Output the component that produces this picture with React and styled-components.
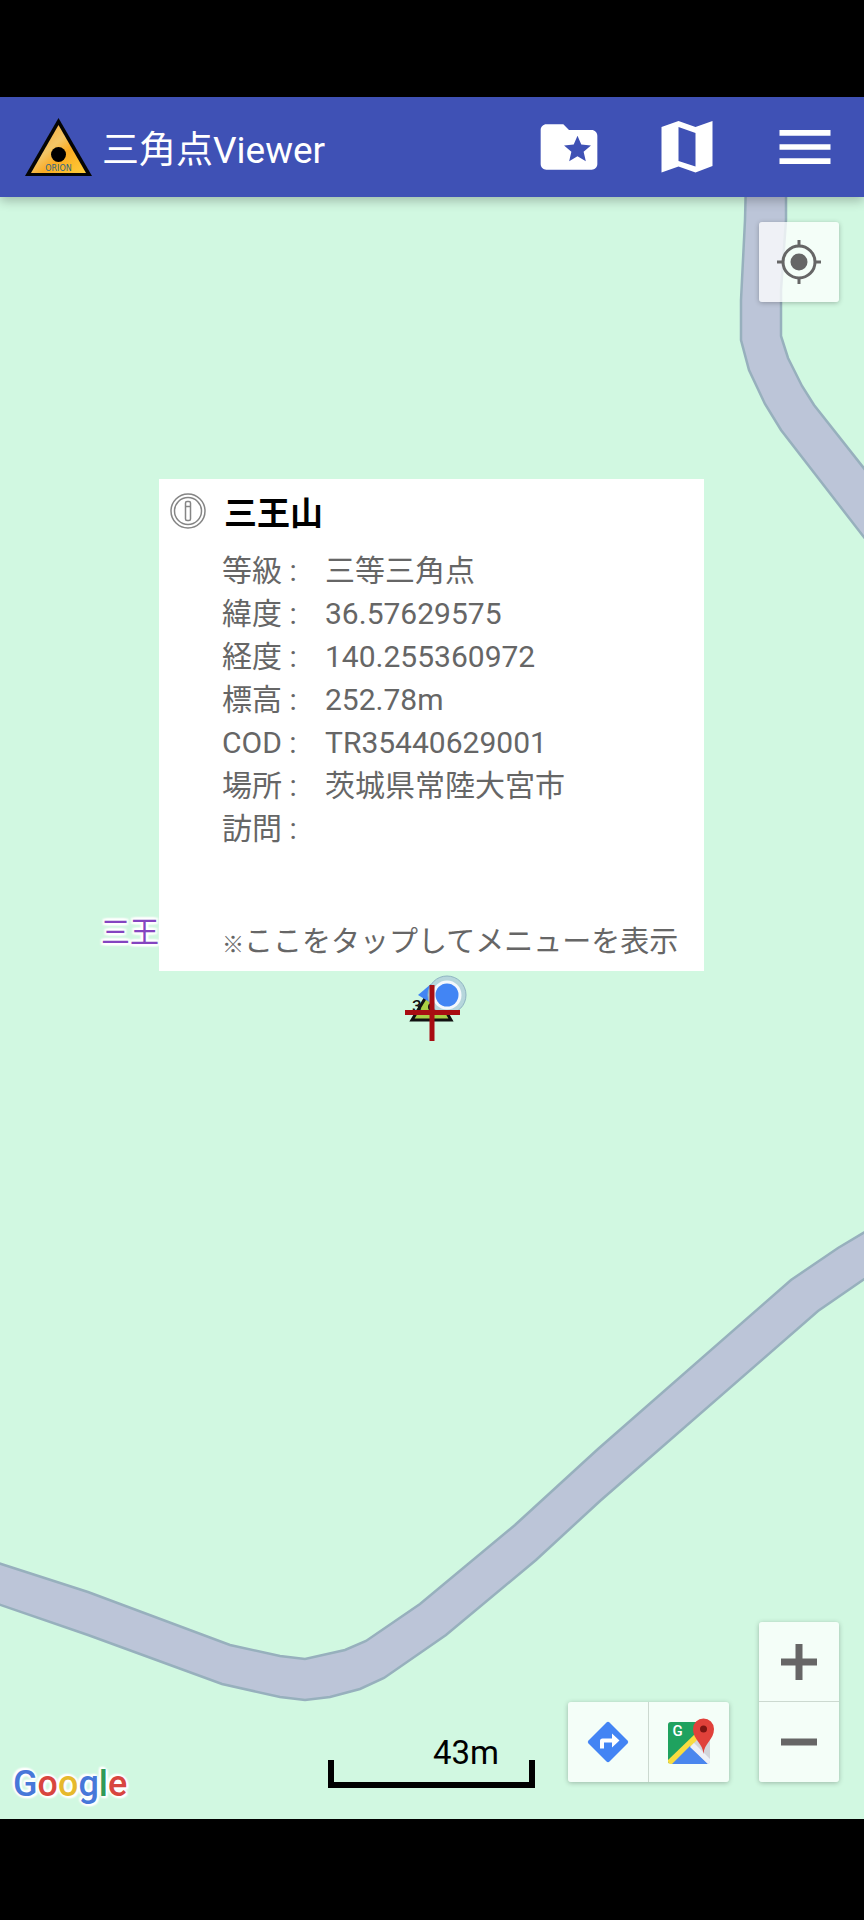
import React from "react";
import styled, { createGlobalStyle } from "styled-components";
import { MdFolderSpecial, MdMenu } from "react-icons/md";

const GlobalStyle = createGlobalStyle`
  *, *::before, *::after { box-sizing: border-box; }
  html, body { margin: 0; background: #000; }
  body { font-family: Roboto, "Noto Sans CJK JP", sans-serif; }
  button { font: inherit; }
`;

const Screen = styled.div`
  display: flex;
  flex-direction: column;
  min-height: 100vh;
  padding: 97px 0 101px;
  background: #000;
`;

const AppBar = styled.header`
  position: relative;
  z-index: 1;
  display: flex;
  align-items: center;
  height: 100px;
  padding: 0 25px;
  background: #3f51b5;
  color: #fff;
  box-shadow: 0 4px 10px rgba(0, 0, 0, 0.24);
`;

const AppTitle = styled.h1`
  flex: 1;
  margin: 8px 0 0 10px;
  font-size: 37px;
  line-height: 44px;
  font-weight: 400;
  white-space: nowrap;
`;

const Actions = styled.nav`
  display: flex;
  gap: 50px;
`;

const IconButton = styled.button`
  display: flex;
  padding: 0;
  border: 0;
  background: none;
  color: #fff;
  cursor: pointer;
`;

const MapArea = styled.main`
  position: relative;
  flex: 1;
  min-height: 1000px;
  overflow: hidden;
  background: #d1f8e1;
`;

const Roads = styled.svg`
  display: block;
  position: absolute;
  width: 100%;
  height: 100%;
`;

const PlaceLabel = styled.span`
  position: absolute;
  left: calc(50% - 331px);
  bottom: calc(50% + 55px);
  font-size: 29px;
  line-height: 40px;
  color: #8445c0;
  white-space: nowrap;
  text-shadow: 2px 0 2px #fff, -2px 0 2px #fff, 0 2px 2px #fff, 0 -2px 2px #fff,
    2px 2px 2px #fff, -2px -2px 2px #fff, 2px -2px 2px #fff, -2px 2px 2px #fff;
`;

const InfoCard = styled.article`
  position: absolute;
  left: 159px;
  right: 160px;
  bottom: calc(50% + 37px);
  padding: 13px 12px 6px 11px;
  background: #fff;
  color: #666;
  font-size: 30px;
  line-height: 43px;
  cursor: pointer;
`;

const CardHead = styled.div`
  display: flex;
  align-items: flex-start;
  gap: 18px;
  height: 44px;
  margin-bottom: 13px;
`;

const CardTitle = styled.h2`
  margin: 0;
  font-size: 33px;
  line-height: 44px;
  font-weight: 700;
  color: #000;
`;

const Details = styled.table`
  border-collapse: collapse;
  margin: 0 0 71px 52px;
`;

const Label = styled.th`
  width: 103px;
  height: 43px;
  padding: 0;
  text-align: left;
  font-weight: 400;
  white-space: pre;
`;

const Value = styled.td`
  padding: 0;
  white-space: nowrap;
`;

const Hint = styled.p`
  height: 44px;
  margin: 0 0 0 52px;
  font-size: 29px;
  white-space: nowrap;
`;

const HintMark = styled.span`
  font-size: 22px;
`;

const Marker = styled.svg`
  position: absolute;
  left: calc(50% - 42px);
  top: calc(50% - 58px);
`;

const tile = `
  background: rgba(255, 255, 255, 0.76);
  border-radius: 3px;
  box-shadow: 0 1px 5px rgba(0, 0, 0, 0.26);
`;

const TileButton = styled.button`
  display: flex;
  align-items: center;
  justify-content: center;
  width: 80px;
  height: 80px;
  padding: 0;
  border: 0;
  background: none;
  cursor: pointer;
`;

const LocateBox = styled.div`
  ${tile}
  position: absolute;
  top: 25px;
  right: 25px;
`;

const BottomControls = styled.div`
  position: absolute;
  right: 25px;
  bottom: 37px;
  display: flex;
  align-items: flex-end;
  gap: 30px;
`;

const TileGroup = styled.div`
  ${tile}
  display: flex;
  flex-direction: ${(p) => (p.$vertical ? "column" : "row")};
  gap: ${(p) => (p.$vertical ? "0" : "1px")};
  ${TileButton} + ${TileButton} {
    box-shadow: ${(p) => (p.$vertical ? "0 -1px 0 #ccd9d0" : "-1px 0 0 #ccd9d0")};
  }
`;

const Scale = styled.div`
  position: absolute;
  left: calc(50% - 104px);
  bottom: 31px;
  width: 207px;
`;

const ScaleText = styled.div`
  padding-right: 36px;
  font-size: 33px;
  line-height: 40px;
  margin-bottom: -13px;
  text-align: right;
  color: #000;
`;

const ScaleLine = styled.div`
  height: 28px;
  border: 6px solid #000;
  border-top: 0;
`;

const GoogleMark = styled.div`
  position: absolute;
  left: 13px;
  bottom: 15px;
  font-size: 36px;
  line-height: 40px;
  font-weight: 500;
  text-shadow: 2px 0 2px #fff, -2px 0 2px #fff, 0 2px 2px #fff, 0 -2px 2px #fff,
    2px 2px 2px #fff, -2px -2px 2px #fff;
`;

const Tint = styled.span`
  color: ${(p) => p.$color};
`;

const logoLetters = [
  ["G", "#4778d9"],
  ["o", "#d84540"],
  ["o", "#e6b92c"],
  ["g", "#4778d9"],
  ["l", "#2f9a58"],
  ["e", "#d84540"],
];

const details = [
  ["等級 :", "三等三角点"],
  ["緯度 :", "36.57629575"],
  ["経度 :", "140.255360972"],
  ["標高 :", "252.78m"],
  ["COD :", "TR35440629001"],
  ["場所 :", "茨城県常陸大宮市"],
  ["訪問 :", ""],
];

function AppLogo() {
  return (
    <svg width="67" height="60" viewBox="0 0 67 60" aria-hidden="true">
      <defs>
        <linearGradient id="gold" x1="0" y1="0" x2="1" y2="1">
          <stop offset="0" stopColor="#f5a02a" />
          <stop offset="0.42" stopColor="#f3c667" />
          <stop offset="0.6" stopColor="#faab22" />
          <stop offset="1" stopColor="#ffce3a" />
        </linearGradient>
      </defs>
      <path d="M33.500 1 67 59H0Z" fill="#050505" />
      <path d="M33.500 8 61 56H6Z" fill="url(#gold)" />
      <circle cx="33.500" cy="37.500" r="7.500" fill="#000" />
      <text x="33.500" y="54" textAnchor="middle" fontFamily="DejaVu Sans" fontSize="8" fill="#2f6684">
        ORION
      </text>
    </svg>
  );
}

function MapIcon() {
  return (
    <svg width="68" height="68" viewBox="0 0 68 68" aria-hidden="true">
      <path
        fill="#fff"
        fillRule="evenodd"
        d="M8.500 14 25.500 8 42.500 14 59.500 8V53L42.500 59.500 25.500 53.500 8.500 59.500ZM25.500 14V48L42.500 53.500V20Z"
      />
    </svg>
  );
}

function InfoIcon() {
  return (
    <svg width="36" height="40" viewBox="0 -1 36 40" fill="none" stroke="#858585" strokeWidth="1.500" aria-hidden="true">
      <circle cx="18" cy="18" r="17" />
      <circle cx="18" cy="18" r="13.500" />
      <rect x="15.500" y="8.500" width="5" height="19" rx="1.500" />
      <path d="M15.500 13.500h5" />
    </svg>
  );
}

function LocateIcon() {
  return (
    <svg width="46" height="46" viewBox="0 0 46 46" aria-hidden="true">
      <circle cx="23" cy="23" r="16" fill="none" stroke="#666" strokeWidth="3" />
      <circle cx="23" cy="23" r="8.500" fill="#666" />
      <path d="M23 1v7M23 38v7M1 23h7M38 23h7" stroke="#666" strokeWidth="3" />
    </svg>
  );
}

function DirectionsIcon() {
  return (
    <svg width="42" height="42" viewBox="0 0 42 42" aria-hidden="true">
      <path d="M19.500 1.500Q21 0 22.500 1.500L40.500 19.500Q42 21 40.500 22.500L22.500 40.500Q21 42 19.500 40.500L1.500 22.500Q0 21 1.500 19.500Z" fill="#4384f4" />
      <path d="M13 27.500V20Q13 17.500 15.500 17.500H25V12.500L32.500 19.500 25 26.500V21.500H17V27.500Z" fill="#fff" />
    </svg>
  );
}

function GoogleMapsIcon() {
  return (
    <svg width="50" height="48" viewBox="-4 0 50 48" aria-hidden="true">
      <defs>
        <clipPath id="sheet">
          <rect x="0" y="4" width="42" height="42" rx="3" />
        </clipPath>
      </defs>
      <g clipPath="url(#sheet)">
        <path d="M0 4H42V46H0Z" fill="#d3d5da" />
        <path d="M0 4H30V18L0 46Z" fill="#1fa25f" />
        <path d="M0 42 27 16 31 20 5 46H0Z" fill="#f9dc40" />
        <path d="M22 28 40 46H4Z" fill="#4a86ee" />
        <path d="M26 25 42 41V46H40L22 29Z" fill="#edf0f6" />
      </g>
      <path d="M35.500 36C35 25 25 22 25 11A10.500 10.500 0 0 1 46 11C46 22 36 25 35.500 36Z" fill="#e0413a" />
      <circle cx="35.500" cy="11" r="3.500" fill="#7d1512" />
      <text x="9.500" y="18" textAnchor="middle" fontFamily="Roboto" fontWeight="500" fontSize="15" fill="#fff">
        G
      </text>
    </svg>
  );
}

export default function App() {
  return (
    <Screen>
      <GlobalStyle />
      <AppBar>
        <AppLogo />
        <AppTitle>三角点Viewer</AppTitle>
        <Actions>
          <IconButton aria-label="お気に入り">
            <MdFolderSpecial size={68} />
          </IconButton>
          <IconButton aria-label="地図の種類">
            <MapIcon />
          </IconButton>
          <IconButton aria-label="メニュー">
            <MdMenu size={68} />
          </IconButton>
        </Actions>
      </AppBar>
      <MapArea>
        <Roads viewBox="0 197 864 1622" preserveAspectRatio="xMidYMid slice" aria-hidden="true">
          <g fill="#bcc5d8" stroke="#97b0bd" strokeWidth="2.500">
            <path d="M746 180 745 220 741 300V340L749 370 765 404 781 430 870 545V476L814 405 802 386 788 358 781 336V290L786 220V180Z" />
            <path d="M-5 1562 88 1592 230 1645 280 1656 305 1659 345 1650 366 1641 420 1604 515 1525 598 1449 791 1280 838 1248 870 1229V1275L818 1311 600 1501 536 1560 446 1635 384 1678 360 1689 330 1697 305 1700 280 1697 222 1684 88 1635-5 1603Z" />
          </g>
        </Roads>
        <PlaceLabel>三王山</PlaceLabel>
        <Marker width="84" height="96" viewBox="390 950 84 96" aria-hidden="true">
          <path d="M432 987 451 1020H412Z" fill="#a9cf45" stroke="#111" strokeWidth="3" />
          <text x="412" y="1012" fontFamily="Roboto" fontWeight="500" fontSize="17" fill="#111">
            3
          </text>
          <circle cx="432" cy="1007" r="4" fill="#111" />
          <path d="M418 995 431 984V1003Z" fill="#4285f4" />
          <circle cx="447" cy="995" r="19" fill="#b6d6dc" stroke="#8fb4c2" strokeWidth="1" />
          <circle cx="447" cy="995" r="14.500" fill="#f4f8fc" />
          <circle cx="447" cy="995" r="11.500" fill="#4285f4" />
          <path d="M405 1012.500H460M432 985V1041" stroke="#a80d12" strokeWidth="5" />
        </Marker>
        <InfoCard>
          <CardHead>
            <InfoIcon />
            <CardTitle>三王山</CardTitle>
          </CardHead>
          <Details>
            <tbody>
              {details.map(([name, value]) => (
                <tr key={name}>
                  <Label scope="row">{name}</Label>
                  <Value>{value}</Value>
                </tr>
              ))}
            </tbody>
          </Details>
          <Hint>
            <HintMark>※</HintMark>ここをタップしてメニューを表示
          </Hint>
        </InfoCard>
        <LocateBox>
          <TileButton aria-label="現在地">
            <LocateIcon />
          </TileButton>
        </LocateBox>
        <GoogleMark>
          {logoLetters.map(([letter, color], i) => (
            <Tint key={i} $color={color}>
              {letter}
            </Tint>
          ))}
        </GoogleMark>
        <Scale>
          <ScaleText>43m</ScaleText>
          <ScaleLine />
        </Scale>
        <BottomControls>
          <TileGroup>
            <TileButton aria-label="ルート">
              <DirectionsIcon />
            </TileButton>
            <TileButton aria-label="Google マップで開く">
              <GoogleMapsIcon />
            </TileButton>
          </TileGroup>
          <TileGroup $vertical>
            <TileButton aria-label="拡大">
              <svg width="36" height="36" viewBox="0 0 36 36" aria-hidden="true">
                <path d="M18 0V36M0 18H36" stroke="#666" strokeWidth="7" />
              </svg>
            </TileButton>
            <TileButton aria-label="縮小">
              <svg width="36" height="36" viewBox="0 0 36 36" aria-hidden="true">
                <path d="M0 18H36" stroke="#666" strokeWidth="7" />
              </svg>
            </TileButton>
          </TileGroup>
        </BottomControls>
      </MapArea>
    </Screen>
  );
}
